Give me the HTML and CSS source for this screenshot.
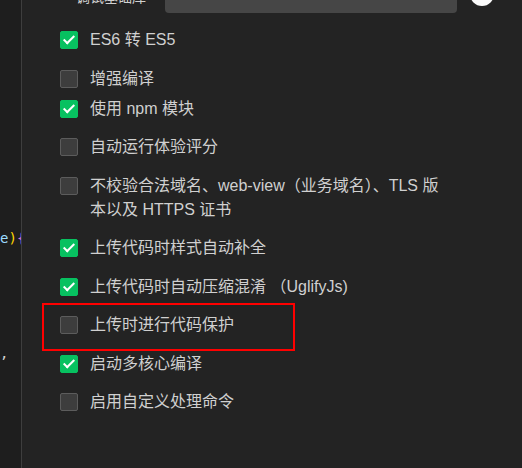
FILE: index.html
```html
<!DOCTYPE html>
<html lang="zh-CN">
<head>
    <meta charset="UTF-8">
    <meta name="viewport" content="width=device-width, initial-scale=1.0">
    <title>本地设置</title>
    <link rel="stylesheet" href="styles.css">
</head>
<body>

<div class="layout">
    <div class="editor">
        <div class="code code-brace"><span class="c-var">e</span><span class="c-paren">)</span><span class="c-brace">{</span></div>
        <div class="code code-comma"><span class="c-comma">,</span></div>
    </div>

    <div class="panel">
        <div class="header">
            <span class="label">调试基础库</span>
            <div class="select"></div>
            <div class="knob"></div>
        </div>

        <div class="options">
            <div class="option"><span class="box checked"></span><span class="text">ES6 转 ES5</span></div>
            <div class="option"><span class="box"></span><span class="text">增强编译</span></div>
            <div class="option tight"><span class="box checked"></span><span class="text">使用 npm 模块</span></div>
            <div class="option"><span class="box"></span><span class="text">自动运行体验评分</span></div>
            <div class="option"><span class="box"></span><span class="text">不校验合法域名、web-view（业务域名）、TLS 版<br>本以及 HTTPS 证书</span></div>
            <div class="option"><span class="box checked"></span><span class="text">上传代码时样式自动补全</span></div>
            <div class="option"><span class="box checked"></span><span class="text">上传代码时自动压缩混淆 （UglifyJs)</span></div>
            <div class="option marked"><span class="box"></span><span class="text">上传时进行代码保护</span></div>
            <div class="option"><span class="box checked"></span><span class="text">启动多核心编译</span></div>
            <div class="option"><span class="box"></span><span class="text">启用自定义处理命令</span></div>
        </div>
    </div>
</div>

</body>
</html>
```

FILE: styles.css
```css
html, body {
    margin: 0;
    height: 100%;
    background-color: #232323;
    overflow: hidden;
}
body {
    font-family: "Liberation Sans", "Noto Sans CJK SC", sans-serif;
    font-size: 16px;
    color: #d0d0d0;
}
.layout {
    display: flex;
    height: 100%;
}
.editor {
    width: 21px;
    flex-shrink: 0;
    background-color: #1e1e1e;
    border-right: 1px solid #3e3e3e;
    position: relative;
    overflow: hidden;
}
.code {
    position: absolute;
    left: 0;
    font-family: "DejaVu Sans Mono", monospace;
    font-size: 14px;
    line-height: 18px;
    white-space: nowrap;
}
.code-brace {
    top: 229px;
}
.code-comma {
    top: 344px;
}
.c-var {
    color: #9cdcfe;
}
.c-paren {
    color: #ffd700;
}
.c-brace {
    color: #da70d6;
}
.c-comma {
    color: #d4d4d4;
}
.panel {
    flex: 1;
    padding-left: 38px;
}
.header {
    display: flex;
    align-items: center;
    height: 32px;
    margin-top: -20px;
}
.label {
    width: 89px;
    padding-left: 16px;
    font-size: 14px;
    flex-shrink: 0;
}
.select {
    width: 292px;
    height: 32px;
    margin-top: 2px;
    background-color: #464646;
    border-radius: 4px;
}
.knob {
    width: 24px;
    height: 24px;
    margin-left: 13px;
    margin-top: -4px;
    border-radius: 50%;
    background-color: #fafafa;
}
.options {
    display: flex;
    flex-direction: column;
    gap: 14.5px;
    margin-top: 16px;
}
.option {
    display: flex;
    align-items: flex-start;
    line-height: 24px;
    position: relative;
}
.option.tight {
    margin-top: -8.5px;
}
.box {
    width: 16px;
    height: 16px;
    margin-top: 3px;
    margin-right: 12px;
    flex-shrink: 0;
    border: 1px solid #5c5c5c;
    border-radius: 2px;
    background-color: #3d3d3d;
    position: relative;
}
.box.checked {
    background-color: #07c160;
    border-color: #07c160;
}
.box.checked::after {
    content: "";
    position: absolute;
    left: 5px;
    top: 1px;
    width: 4px;
    height: 9px;
    border: solid #fff;
    border-width: 0 2px 2px 0;
    transform: rotate(45deg);
}
.marked::before {
    content: "";
    position: absolute;
    left: -18px;
    top: -10px;
    width: 249px;
    height: 44px;
    border: 2px solid #f00;
}
```
